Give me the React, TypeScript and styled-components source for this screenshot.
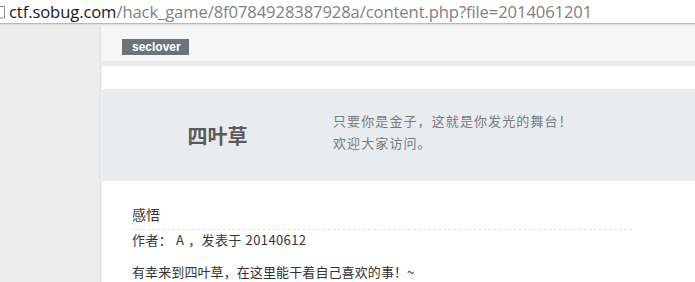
import React from "react";
import styled, { createGlobalStyle } from "styled-components";

const Global = createGlobalStyle`
  html, body { margin: 0; padding: 0; background: #ffffff; }
  body { font-family: "Liberation Sans", "Noto Sans CJK SC", sans-serif; }
`;

const Page = styled.div`
  width: 695px;
  height: 282px;
  overflow: hidden;
  display: flex;
  flex-direction: column;
`;

const AddressBar = styled.div`
  height: 23px;
  flex: none;
  display: flex;
  align-items: center;
  background: #ffffff;
  border-bottom: 1px solid #b9b9b9;
  box-shadow: 0 1px 0 #dedede, 0 2px 0 #e9e9e9;
  position: relative;
  z-index: 1;
`;

const PageIcon = styled.svg`
  flex: none;
  width: 6px;
  height: 14px;
  margin-right: 3px;
`;

const Url = styled.div`
  font-family: "Open Sans", "Liberation Sans", sans-serif;
  font-size: 16.6px;
  line-height: 23px;
  color: #808080;
  white-space: nowrap;
  letter-spacing: -0.1px;
`;

const Host = styled.span`
  color: #1a1a1a;
`;

const Body = styled.div`
  flex: 1;
  display: flex;
  margin-top: 2px;
`;

const Gutter = styled.div`
  width: 101px;
  flex: none;
  background: #ececec;
  box-shadow: inset -2px 0 2px -1px #e0e0e0;
`;

const Main = styled.div`
  flex: 1;
  display: flex;
  flex-direction: column;
  border-left: 1px solid #f4f4f4;
`;

const NavBar = styled.div`
  flex: none;
  background: #f6f6f6;
  border-bottom: 5px solid #eaeaea;
  padding-left: 20px;
  padding-top: 11px;
  box-sizing: border-box;
  height: 40px;
`;

const Badge = styled.span`
  display: inline-block;
  background: #6d7378;
  color: #ffffff;
  font-family: "Liberation Sans", sans-serif;
  font-weight: bold;
  font-size: 12px;
  line-height: 16px;
  padding: 0 10px;
  width: 67px;
  box-sizing: border-box;
`;

const Hero = styled.div`
  margin-top: 23px;
  height: 92px;
  flex: none;
  background: #e8ecef;
  display: flex;
  align-items: center;
`;

const SiteName = styled.div`
  width: 231px;
  flex: none;
  text-align: center;
  font-family: "Noto Sans CJK SC", sans-serif;
  font-weight: bold;
  font-size: 20px;
  color: #5a5a5a;
`;

const Slogan = styled.div`
  font-family: "Noto Sans CJK SC", sans-serif;
  font-size: 13px;
  line-height: 22px;
  letter-spacing: 1.1px;
  color: #7a7a7a;
  margin-top: -7px;
`;

const Article = styled.div`
  padding: 24px 63px 0 30px;
`;

const Title = styled.div`
  font-family: "Noto Sans CJK SC", sans-serif;
  font-size: 14px;
  line-height: 18px;
  color: #333333;
  padding-bottom: 6px;
  border-bottom: 1px dashed #e2e2e2;
`;

const Meta = styled.div`
  font-family: "Noto Sans CJK SC", sans-serif;
  font-size: 13px;
  line-height: 20px;
  letter-spacing: 0.4px;
  word-spacing: 0.5px;
  color: #333333;
`;

const Paragraph = styled.p`
  margin: 12px 0 0;
  font-family: "Noto Sans CJK SC", sans-serif;
  font-size: 13px;
  line-height: 20px;
  letter-spacing: 0.1px;
  color: #333333;
`;

export default function App() {
  return (
    <Page>
      <Global />
      <AddressBar>
        <PageIcon viewBox="0 0 6 14">
          <path d="M0 1.5 H4.5 V13 H0" fill="none" stroke="#8a8a8a" strokeWidth="1" />
        </PageIcon>
        <Url>
          <Host>ctf.sobug.com</Host>/hack_game/8f0784928387928a/content.php?file=2014061201
        </Url>
      </AddressBar>
      <Body>
        <Gutter />
        <Main>
          <NavBar>
            <Badge>seclover</Badge>
          </NavBar>
          <Hero>
            <SiteName>四叶草</SiteName>
            <Slogan>
              只要你是金子，这就是你发光的舞台！
              <br />
              欢迎大家访问。
            </Slogan>
          </Hero>
          <Article>
            <Title>感悟</Title>
            <Meta>作者： A ，发表于 20140612</Meta>
            <Paragraph>有幸来到四叶草，在这里能干着自己喜欢的事！~</Paragraph>
          </Article>
        </Main>
      </Body>
    </Page>
  );
}
